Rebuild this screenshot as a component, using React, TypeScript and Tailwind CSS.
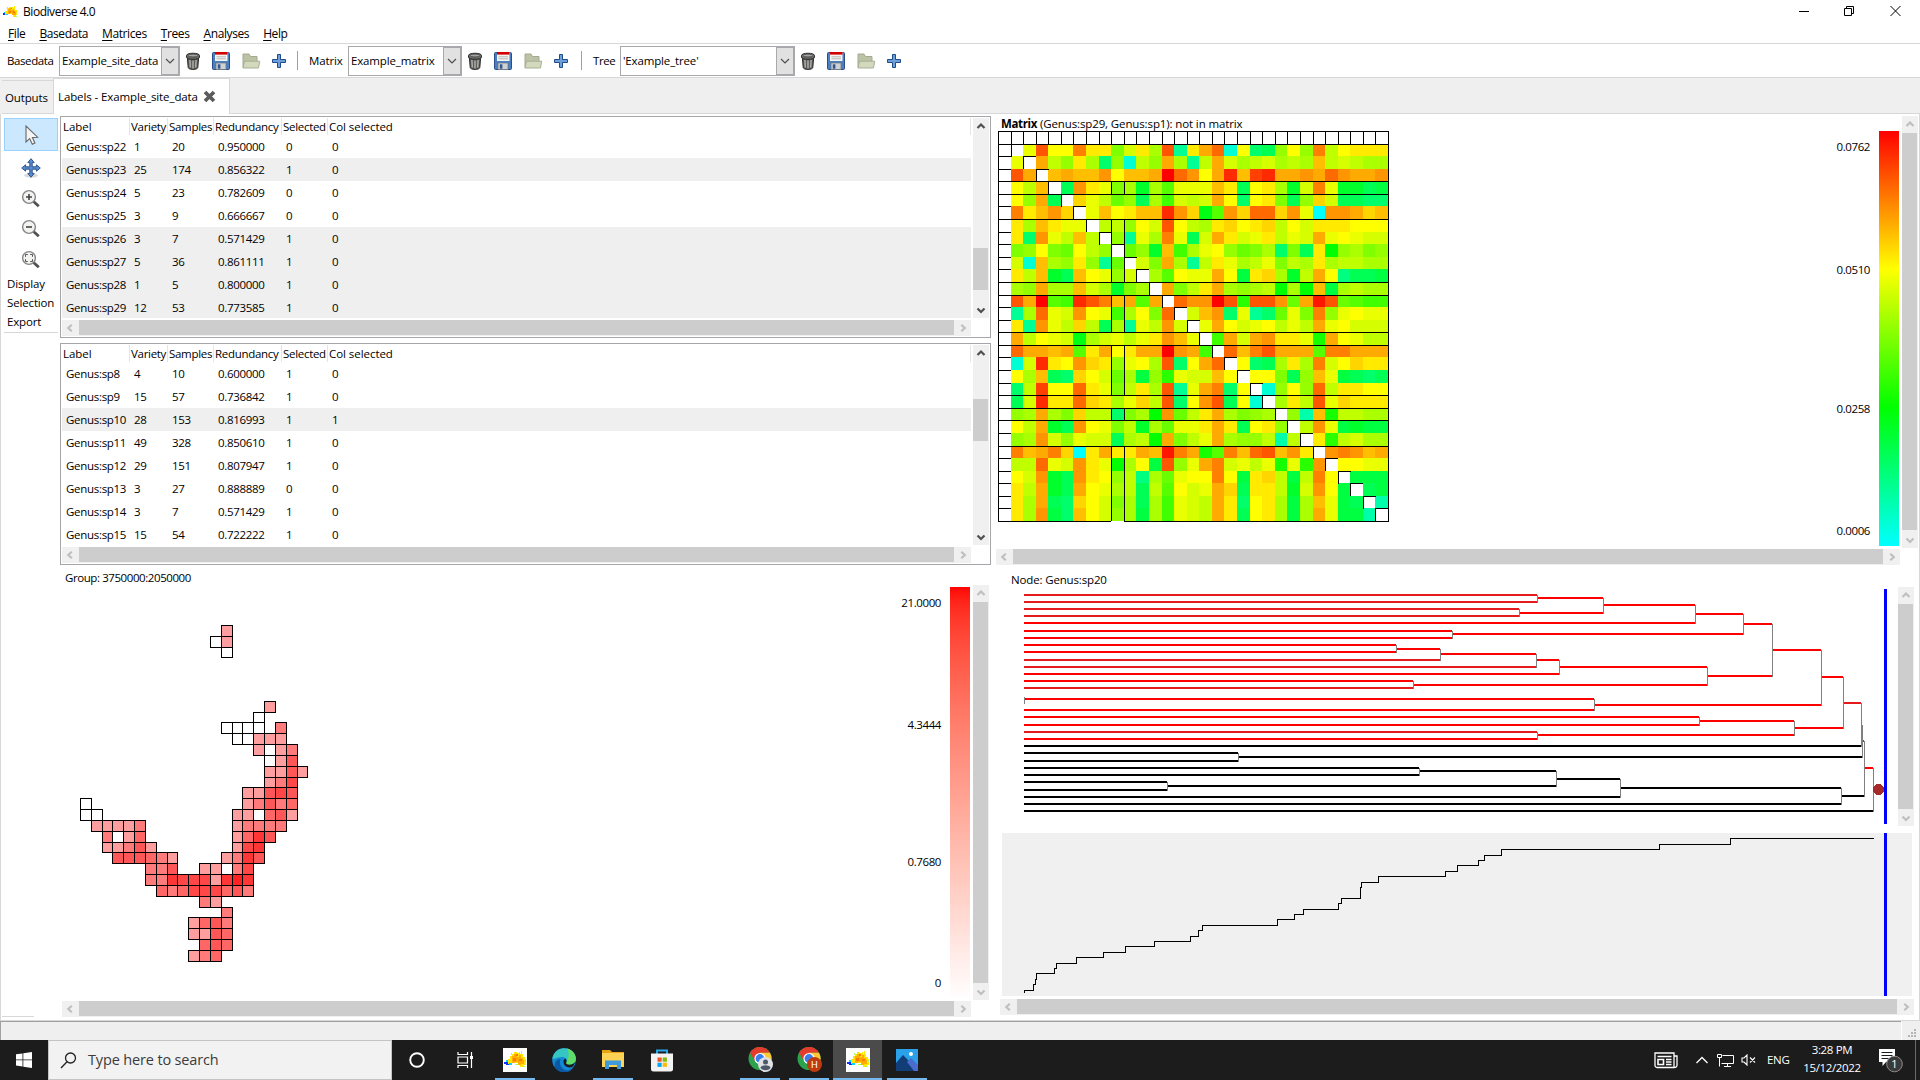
import React from "react";

type Kids = { children?: React.ReactNode };

/* ---------- small icons ---------- */

const Australia = ({ size, plain }: { size: number; plain?: boolean }) => (
  <svg width={size} height={size} viewBox="0 0 24 24" shapeRendering="crispEdges">
    {!plain && <rect width="24" height="24" fill="#fff" />}
    <path d="M3 12h2v-1h2V8h2V6h2V4h3v1h2V4h1v2h1V3h1v3h1v3h2v2h1v6h-2v2h-4v-2h-2v-2H9v1H6v1H3z" fill="#ffe600" />
    <path d="M9 8h2V6h3v3h2V7h2v3h2v2h1v4h-3v1h-3v-3h-3v1H9z" fill="#ffab00" />
    <path d="M10 10h3v3h-3zM16 11h3v2h-3zM13 6h2v2h-2z" fill="#ff7a00" />
    <path d="M3 12h2v2H3zM6 15h3v2H6z" fill="#00d8ff" />
    <path d="M1 14h4v2H1zM3 16h3v1H3z" fill="#1030ff" />
    <path d="M20 18h2v1h-2zM12 16h3v1h-3zM22 12h1v2h-1zM8 5h1v2H8z" fill="#9dff5a" />
  </svg>
);

const Trash = () => (
  <svg width="16" height="18" viewBox="0 0 16 18">
    <path d="M2.300 5h11.400l-.9 10.500c-.2 1.200-2 1.900-4.800 1.900s-4.600-.7-4.800-1.900z" fill="#5d5d5b" stroke="#2c2c2c" />
    <path d="M4.900 8l.4 7.500M8 8.500V16.500M11.100 8l-.4 7.500" stroke="#b9b9b5" strokeWidth="1.300" />
    <path d="M1.500 3.500c0-3 13-3 13 0v1.600c0 2.900-13 2.900-13 0z" fill="#6e6e6b" stroke="#2c2c2c" />
    <ellipse cx="8" cy="3.500" rx="5.200" ry="1.500" fill="#a5a5a2" stroke="#3a3a3a" strokeWidth=".8" />
  </svg>
);

const Floppy = () => (
  <svg width="20" height="20" viewBox="0 0 20 20">
    <rect x="1.500" y="1.500" width="17" height="17" rx="1" fill="#4a7fc1" stroke="#2a4f86" />
    <rect x="4" y="1" width="12.500" height="9" fill="#f4f4f2" />
    <rect x="4" y="1" width="12.500" height="2.600" fill="#d40000" />
    <path d="M5.500 5.800h9.500M5.500 7.800h9.500" stroke="#b8b8b8" />
    <rect x="5" y="12" width="10" height="6.500" fill="#cfd2d2" stroke="#6e7478" strokeWidth=".7" />
    <rect x="6.800" y="13.300" width="2.600" height="4.400" fill="#31568f" />
  </svg>
);

const Folder = () => (
  <svg width="20" height="18" viewBox="0 0 20 18">
    <path d="M2 15.500V2h6l1.500 2.500H16V15.500z" fill="#bcc3a4" stroke="#a4a993" />
    <path d="M3.500 9.200h15.200L17.500 16H2z" fill="#d3d9bd" stroke="#a9af97" />
  </svg>
);

const Plus = () => (
  <svg width="16" height="16" viewBox="0 0 16 16">
    <path d="M6.500 1.500h3v5h5v3h-5v5h-3v-5h-5v-3h5z" fill="#6f9fd8" stroke="#1f4b8a" />
  </svg>
);

const CloseX = () => (
  <svg width="13" height="13" viewBox="0 0 13 13">
    <path d="M2 2l9 9M11 2l-9 9" stroke="#5b5b59" strokeWidth="3.700" />
  </svg>
);

const Pointer = () => (
  <svg width="14" height="21" viewBox="0 0 14 21">
    <path d="M1 1v16l3.700-3.400 2.600 5.700 2.600-1.200-2.500-5.600 5.200-.3z" fill="#f5f5f5" stroke="#666" strokeWidth="1.100" />
  </svg>
);

const Move = () => (
  <svg width="20" height="20" viewBox="0 0 20 20">
    <ellipse cx="10" cy="17.500" rx="7" ry="2" fill="#d9d9d9" />
    <path
      d="M10 .7l3.200 3.900h-2v4.200h4.200v-2L19.300 10l-3.900 3.200v-2h-4.200v4.200h2L10 19.300l-3.200-3.900h2v-4.200H4.600v2L.7 10l3.900-3.200v2h4.200V4.600h-2z"
      fill="#5a8ccb"
      stroke="#204a87"
      strokeWidth=".9"
    />
  </svg>
);

const Zoom = ({ kind }: { kind: "in" | "out" | "fit" }) => (
  <svg width="20" height="20" viewBox="0 0 20 20">
    <path d="M12.500 12.500l5.300 4.800" stroke="#50504e" strokeWidth="2.800" />
    <circle cx="8" cy="8" r="6.400" fill="#f3f3f1" stroke="#858583" strokeWidth="1.400" />
    {kind === "in" && <path d="M5 8h6M8 5v6" stroke="#444" strokeWidth="1.600" />}
    {kind === "out" && <path d="M5 8h6" stroke="#444" strokeWidth="1.600" />}
    {kind === "fit" && <path d="M4.500 6.800V4.500h2.300M9.200 4.500h2.300v2.300M11.500 9.200v2.300H9.200M6.800 11.500H4.500V9.200" stroke="#555" fill="none" />}
  </svg>
);

const chevrons = {
  up: "M4.500 10L8 6.500l3.500 3.500",
  down: "M4.500 6.500L8 10l3.500-3.500",
  left: "M9.800 4.800L6.300 8l3.500 3.200",
  right: "M6.300 4.800L9.800 8l-3.500 3.200",
};

const Chevron = ({ dir, dark }: { dir: keyof typeof chevrons; dark?: boolean }) => (
  <svg width="16" height="16" viewBox="0 0 16 16" className="shrink-0">
    <path d={chevrons[dir]} fill="none" stroke={dark ? "#505050" : "#bfbfbf"} strokeWidth="2.200" />
  </svg>
);

const HScroll = ({ className = "" }: { className?: string }) => (
  <div className={`flex h-4 shrink-0 bg-[#f0f0f0] ${className}`}>
    <Chevron dir="left" />
    <div className="mr-px ml-px h-[15px] flex-1 bg-[#cdcdcd]" />
    <Chevron dir="right" />
  </div>
);

const VScroll = ({ className = "", dark, top, thumb }: { className?: string; dark?: boolean; top: number; thumb: number }) => (
  <div className={`flex w-4 shrink-0 flex-col justify-between bg-[#f0f0f0] ${className}`}>
    <Chevron dir="up" dark={dark} />
    <div className="flex-1">
      <div className="w-[15px] bg-[#cdcdcd]" style={{ marginTop: top, height: thumb }} />
    </div>
    <Chevron dir="down" dark={dark} />
  </div>
);

/* ---------- toolbar ---------- */

const Combo = ({ children, className }: Kids & { className: string }) => (
  <div className={`flex h-[30px] border border-[#a9a9ad] ${className}`}>
    <span className="flex-1 pl-[2px] leading-[28px]">{children}</span>
    <span className="flex w-[18px] items-center justify-center border border-[#a9a9ad] bg-[#e1e1e1]">
      <svg width="10" height="6" viewBox="0 0 10 6">
        <path d="M1 1l4 4 4-4" fill="none" stroke="#505050" strokeWidth="1.200" />
      </svg>
    </span>
  </div>
);

const Tools = () => (
  <div className="flex items-center">
    <span className="ml-[5px] flex w-[16px]"><Trash /></span>
    <span className="ml-[10px] flex"><Floppy /></span>
    <span className="ml-[10px] flex"><Folder /></span>
    <span className="ml-[10px] flex"><Plus /></span>
  </div>
);

/* ---------- label tables ---------- */

type Row = [string, string, string, string, string, string, boolean];

const upper: Row[] = [
  ["Genus:sp22", "1", "20", "0.950000", "0", "0", false],
  ["Genus:sp23", "25", "174", "0.856322", "1", "0", true],
  ["Genus:sp24", "5", "23", "0.782609", "0", "0", false],
  ["Genus:sp25", "3", "9", "0.666667", "0", "0", false],
  ["Genus:sp26", "3", "7", "0.571429", "1", "0", true],
  ["Genus:sp27", "5", "36", "0.861111", "1", "0", true],
  ["Genus:sp28", "1", "5", "0.800000", "1", "0", true],
  ["Genus:sp29", "12", "53", "0.773585", "1", "0", true],
];

const lower: Row[] = [
  ["Genus:sp8", "4", "10", "0.600000", "1", "0", false],
  ["Genus:sp9", "15", "57", "0.736842", "1", "0", false],
  ["Genus:sp10", "28", "153", "0.816993", "1", "1", true],
  ["Genus:sp11", "49", "328", "0.850610", "1", "0", false],
  ["Genus:sp12", "29", "151", "0.807947", "1", "0", false],
  ["Genus:sp13", "3", "27", "0.888889", "0", "0", false],
  ["Genus:sp14", "3", "7", "0.571429", "1", "0", false],
  ["Genus:sp15", "15", "54", "0.722222", "1", "0", false],
];

const cols = "grid grid-cols-[68px_38px_46px_68px_46px_1fr]";

const Table = ({ rows, top, thumb }: { rows: Row[]; top: number; thumb: number }) => (
  <div className="flex h-[222px] w-[931px] flex-col border border-[#a5a5aa] p-px">
    <div className="flex h-[200px]">
      <div className="flex h-[200px] w-[909px] flex-col overflow-hidden">
        <div className={`${cols} h-[17px] shrink-0 leading-[17px]`}>
          {["Label", "Variety", "Samples", "Redundancy", "Selected", "Col selected"].map((h) => (
            <span
              key={h}
              className={`border-r border-[#e5e5e5] pl-[1px] whitespace-nowrap ${h === "Col selected" || h === "Label" ? "tracking-[-0.050px]" : "tracking-[-0.300px]"}`}
            >
              {h}
            </span>
          ))}
        </div>
        <div className="flex flex-col tracking-[-0.300px]">
          {rows.map((r) => (
            <div key={r[0]} className={`${cols} h-[23px] leading-[23px] ${r[6] ? "bg-[#efefef]" : "bg-white"}`}>
              {r.slice(0, 6).map((c, i) => (
                <span key={i} className="pl-[4px]">{c}</span>
              ))}
            </div>
          ))}
        </div>
      </div>
      <VScroll className="ml-[2px]" dark top={top} thumb={thumb} />
    </div>
    <HScroll className="mt-[2px] w-[909px]" />
  </div>
);

/* ---------- matrix heat map ---------- */

// Upper triangle, one character per cell; each step is five degrees of hue.
const triangle = [
  "d4cc6bbiebg4vb85yctshch6fcbbb",
  "8fhbgthyfh8gvf8egfegfg9fefgg",
  "98997c998057c82932887857887",
  "s7bdigqgkddd9bscbgqe6dqqsr",
  "adfjhsglefe8ctcbishaesstt",
  "d9cb9927apk7a55a7dA778a9",
  "ffhce4cfgbacbafcebbbccc",
  "hvdg6dse8bedbfde8dcdee",
  "jhq9lgdchjigtisbohgih",
  "ei8gvfbdgfdifgbgffgg",
  "gkcdd8crbagqf8cussr",
  "8ifb8ghgfogo9rgfgg",
  "57704m447j814jkll",
  "e97tdvtjdi6hdcdd",
  "d8cedcfdf8dceee",
  "l8e87bbdn8cdff",
  "5964888k66888",
  "ctsgbg6ecabb",
  "ccish9drsts",
  "yhch5fbbcc",
  "gbf4dabbb",
  "hw9nffgg",
  "f7drqrr",
  "bmfegg",
  "76798",
  "ccdd",
  "rrr",
  "sr",
  "w",
];
const scale = "0123456789abcdefghijklmnopqrstuvwxyzA";
const S = 390 / 31;
const at = (i: number) => Math.round(i * S);
const ruled = [1, 4, 5, 7, 12, 13, 16, 17, 21, 22, 23, 25];
const columnRuns = [[4, 5], [7, 12], [13, 16], [17, 21], [22, 23], [25, 31]];
const idx = Array.from({ length: 31 }, (_, i) => i);

const Matrix = () => (
  <svg width="392" height="392" viewBox="0 0 392 392" shapeRendering="crispEdges" className="block">
    {idx.slice(1).map((r) =>
      idx.slice(1).map((c) => {
        if (r === c) return null;
        const a = Math.min(r, c);
        const b = Math.max(r, c);
        const hue = scale.indexOf(triangle[a - 1][b - a - 1]) * 5;
        return (
          <rect key={`${r}-${c}`} x={at(c)} y={at(r)} width={at(c + 1) - at(c)} height={at(r + 1) - at(r)} fill={`hsl(${hue} 100% 50%)`} />
        );
      }),
    )}
    <g fill="#000">
      {idx.slice(1).map((i) => (
        <g key={i}>
          <rect x={at(i)} y={at(i)} width={at(i + 1) - at(i)} height={at(i + 1) - at(i)} fill="#fff" />
          <rect x={at(i)} y={at(i)} width={S} height="1" />
          <rect x={at(i)} y={at(i)} width="1" height={S} />
          <rect x="0" y={at(i)} width={S} height="1" />
          <rect x={at(i)} y="0" width="1" height={S} />
        </g>
      ))}
      {ruled.map((i) => (
        <rect key={i} x="0" y={at(i)} width="390" height="1" />
      ))}
      {columnRuns.map(([a, b]) =>
        [9, 10].map((c) => <rect key={`${a}${c}`} x={at(c)} y={at(a)} width="1" height={at(b) - at(a)} />),
      )}
      <rect x="0" y="0" width="391" height="1" />
      <rect x="0" y="0" width="1" height="391" />
      <rect x="390" y="0" width="1" height="391" />
      <rect x="0" y="390" width={at(9)} height="1" />
      <rect x={at(10)} y="390" width={390 - at(10)} height="1" />
    </g>
  </svg>
);

/* ---------- map ---------- */

const shades: Record<string, string> = {
  w: "#ffffff", "1": "#ff9e9e", "2": "#ff7b7b", "3": "#ff6666", "4": "#ff5757", "5": "#ff4747", "6": "#ff3636", "7": "#ff2222",
};
const mapRuns: [number, number, string][] = [
  [0, 13, "1"], [1, 12, "w1"], [2, 13, "w"], [7, 17, "1"], [8, 16, "w"], [9, 13, "wwww"], [9, 18, "2"],
  [10, 14, "ww111"], [11, 16, "1w12"], [12, 17, "w14"], [13, 17, "1141"], [14, 17, "125"], [15, 15, "11454"],
  [16, 0, "w"], [16, 15, "12423"], [17, 0, "ww"], [17, 14, "11w341"], [18, 1, "11112"], [18, 14, "12222"],
  [19, 2, "2w13"], [19, 14, "1364"], [20, 2, "11241"], [20, 14, "156"], [21, 3, "444321"], [21, 13, "1264"],
  [22, 6, "224"], [22, 11, "11w25"], [23, 6, "2265551676"], [24, 7, "323555342"], [25, 11, "21"], [26, 13, "2"],
  [27, 10, "1342"], [28, 10, "1143"], [29, 11, "343"], [30, 10, "123"],
];
const M = 10.83;

const SpeciesMap = () => (
  <svg width="240" height="350" viewBox="0 0 240 350" shapeRendering="crispEdges" className="block">
    {mapRuns.flatMap(([r, c0, s]) =>
      s.split("").map((k, i) => {
        const x = Math.round((c0 + i) * M);
        const y = Math.round(r * M);
        return (
          <rect
            key={`${r}-${c0 + i}`}
            x={x + 0.5}
            y={y + 0.5}
            width={Math.round((c0 + i + 1) * M) - x}
            height={Math.round((r + 1) * M) - y}
            fill={shades[k]}
            stroke="#000"
          />
        );
      }),
    )}
  </svg>
);

/* ---------- dendrogram ---------- */

const R = "#ff0000";
const C = "#e41a1c";
const K = "#000000";
const branches: [number, number, number, string][] = [
  [595, 1024, 1537, C], [602, 1024, 1537, C], [609, 1024, 1519, C], [616, 1024, 1519, C], [623, 1024, 1695, R],
  [631, 1024, 1452, R], [638, 1024, 1452, R], [645, 1024, 1396, R], [652, 1024, 1396, R], [660, 1024, 1440, C],
  [667, 1024, 1536, C], [674, 1024, 1559, R], [681, 1024, 1413, R], [688, 1024, 1413, C], [699, 1025, 1594, R],
  [710, 1024, 1594, R], [717, 1024, 1699, R], [725, 1024, 1699, R], [732, 1024, 1537, C], [739, 1024, 1537, R],
  [746, 1024, 1861, K], [753, 1024, 1238, K], [761, 1024, 1238, K], [768, 1024, 1419, K], [775, 1024, 1419, K],
  [782, 1024, 1167, K], [790, 1024, 1167, K], [797, 1024, 1620, K], [804, 1024, 1841, K], [811, 1024, 1873, K],
  [598, 1538, 1603, R], [613, 1520, 1603, R], [605, 1604, 1695, R], [614, 1696, 1743, R], [634, 1453, 1743, R],
  [624, 1744, 1772, R], [649, 1397, 1440, R], [654, 1441, 1536, R], [660, 1537, 1559, R], [667, 1560, 1707, R],
  [685, 1414, 1707, R], [676, 1708, 1772, R], [650, 1773, 1821, R], [705, 1595, 1821, R], [677, 1822, 1843, R],
  [721, 1700, 1794, R], [735, 1538, 1794, R], [728, 1795, 1843, R], [703, 1844, 1861, C], [741, 1863, 1864, C],
  [757, 1239, 1862, K], [771, 1420, 1556, K], [786, 1168, 1556, K], [779, 1557, 1620, K], [788, 1621, 1841, K],
  [796, 1842, 1864, K], [768, 1865, 1873, R],
];
const joins: [number, number, number][] = [
  [1537, 595, 602], [1519, 609, 616], [1603, 598, 613], [1695, 605, 623], [1743, 614, 634], [1452, 631, 638],
  [1396, 645, 652], [1440, 649, 660], [1536, 654, 667], [1559, 660, 674], [1413, 681, 688], [1707, 667, 685],
  [1772, 624, 676], [1024, 697, 703], [1594, 699, 710], [1821, 650, 705], [1699, 717, 725], [1537, 732, 739],
  [1794, 721, 735], [1843, 677, 728], [1861, 703, 746], [1862, 725, 757], [1238, 753, 761], [1419, 768, 775],
  [1167, 782, 790], [1556, 771, 786], [1620, 779, 797], [1841, 788, 804], [1864, 741, 796], [1873, 768, 811],
];

const Tree = () => (
  <svg width="896" height="245" viewBox="1002 585 896 245" shapeRendering="crispEdges" className="block">
    {branches.map(([y, a, b, f]) => (
      <rect key={`${y}-${a}`} x={a} y={y - 1} width={b - a} height="2" fill={f} />
    ))}
    {joins.map(([x, a, b]) => (
      <rect key={`${x}-${a}`} x={x} y={a} width="1" height={b - a + 1} fill="#808080" />
    ))}
    <circle cx="1878.500" cy="789.500" r="5.500" fill="#a52a2a" />
    <rect x="1884" y="589" width="3" height="235" fill="#0000ff" />
  </svg>
);

const steps: [number, number][] = [
  [1024, 990], [1033, 984], [1035, 979], [1036, 973], [1054, 968], [1056, 963], [1076, 957], [1103, 952], [1125, 946],
  [1154, 941], [1190, 936], [1198, 930], [1202, 925], [1277, 919], [1294, 914], [1303, 909], [1338, 903], [1341, 898],
  [1360, 887], [1361, 882], [1378, 876], [1445, 871], [1457, 865], [1478, 860], [1484, 855], [1501, 849], [1659, 844],
  [1730, 838],
];

const StepPlot = () => (
  <svg width="910" height="163" viewBox="1002 833 910 163" shapeRendering="crispEdges" className="block bg-[#f0f0f0]">
    <path d={`M1024.500 993${steps.map(([x, y]) => `H${x + 0.5}V${y + 0.5}`).join("")}H1874`} fill="none" stroke="#000" />
    <rect x="1884" y="833" width="3" height="163" fill="#0000ff" />
  </svg>
);

const Ticks = ({ items, className }: { items: [string, string][]; className: string }) => (
  <div className={`flex flex-col items-end tracking-[-0.400px] ${className}`}>
    {items.map(([t, h]) => (
      <span key={t} className={`leading-4 ${h}`}>{t}</span>
    ))}
  </div>
);

/* ---------- task bar ---------- */

const Chrome = ({ badge }: { badge: string }) => (
  <svg width="28" height="28" viewBox="0 0 28 28" className="ml-[2px]">
    <circle cx="13" cy="12.500" r="11.500" fill="#2ba24c" />
    <path d="M3.040 6.750A11.500 11.500 0 0 1 22.960 6.750H13L8 15z" fill="#e33b2e" />
    <path d="M22.960 6.750A11.500 11.500 0 0 1 13 24L18 13 13 6.750z" fill="#fcc934" />
    <circle cx="13" cy="12.500" r="5.600" fill="#fff" />
    <circle cx="13" cy="12.500" r="4.400" fill="#3b7ded" />
    <circle cx="18.500" cy="18.500" r="7.500" fill={badge === "H" ? "#c0390f" : "#dfe1e5"} />
    {badge === "H" ? (
      <text x="18.500" y="22" fontSize="9.500" textAnchor="middle" fill="#fff" fontFamily="Roboto, sans-serif">H</text>
    ) : (
      <g fill="#4d5868">
        <circle cx="18.500" cy="16" r="2.500" />
        <path d="M13.500 22c0-3.600 10-3.600 10 0-2.500 3-7.500 3-10 0z" />
      </g>
    )}
  </svg>
);

const Edge = () => (
  <svg width="24" height="24" viewBox="0 0 24 24">
    <circle cx="12" cy="12" r="11.800" fill="#1389d6" />
    <path d="M.4 10.500C1.500 4 6.500.2 12 .2c7 0 11.800 5 11.800 10.300 0 4-3 6.300-6.300 6.300-2.500 0-4-1-3.300-2.200 1.300-2.100.3-5.600-4-5.600-4.500 0-8 2.500-9.800 1.500z" fill="#35c6c3" />
    <path d="M15 .6c5.300 1.300 8.800 5.600 8.800 9.900 0 4-3 6.300-6.300 6.300-2.500 0-4-1-3.300-2.200C16.500 11 18 5 15 .6z" fill="#5fdc6a" />
    <path d="M8.500 11.500c-2 5 1.500 10.800 7.500 10.800 2 0 4-.8 5.500-2A11.800 11.800 0 0 1 3 19.700C1.500 14 5.500 10.500 8.500 11.500z" fill="#0c59a4" />
    <path d="M14.200 14.600c-.7 1.200.8 2.200 3.300 2.200 2.200 0 4.200-1 5.300-2.700-.3 2-.9 3.400-1.800 4.500-4 2-9 .5-9.500-4.600-.1-1.500.5-2.500 1.500-3.500 1.600.6 2 2.600 1.200 4.100z" fill="#1c1c1c" />
  </svg>
);

const Explorer = () => (
  <svg width="24" height="22" viewBox="0 0 24 22">
    <path d="M1 1h8l2 2h12v6H1z" fill="#e8a317" />
    <path d="M1 4h22v14H1z" fill="#fcd354" />
    <path d="M4 20v-8.500h16V20h-4v-4h-8v4z" fill="#3e9ad8" />
  </svg>
);

const Store = () => (
  <svg width="24" height="24" viewBox="0 0 24 24">
    <path d="M7 6V2.500h10V6" fill="none" stroke="#28a8ea" strokeWidth="2" />
    <path d="M1 5.500h22V21a2.500 2.500 0 0 1-2.500 2.500h-17A2.500 2.500 0 0 1 1 21z" fill="#f3f3f3" />
    <path d="M7.500 9.500h4.200v4.200H7.500z" fill="#f35325" />
    <path d="M12.700 9.500h4.200v4.200h-4.200z" fill="#81bc06" />
    <path d="M7.500 14.700h4.200v4.200H7.500z" fill="#05a6f0" />
    <path d="M12.700 14.700h4.200v4.200h-4.200z" fill="#ffba08" />
  </svg>
);

const Photos = () => (
  <svg width="22" height="22" viewBox="0 0 22 22">
    <rect width="22" height="22" fill="#2aa1e8" />
    <path d="M0 14L7 6l15 15v1H0z" fill="#123e78" />
    <path d="M11 13l4-4 7 7v6h-4z" fill="#4a6ccc" />
    <circle cx="15" cy="5" r="2" fill="#fff" />
  </svg>
);

const TaskItem = ({ children, open, active }: Kids & { open?: boolean; active?: boolean }) => (
  <div className={`flex h-10 w-[49px] flex-col items-center ${active ? "bg-[#4b4b4b]" : ""}`}>
    <div className="flex h-[38px] items-center justify-center pt-px">{children}</div>
    <div className={`h-[2px] ${active ? "w-full" : "w-10"} ${open || active ? "bg-[#76b9ed]" : ""}`} />
  </div>
);

export default function App() {
  return (
    <div className="flex h-[1080px] w-[1920px] flex-col overflow-hidden bg-white font-['Open_Sans','Noto_Sans',sans-serif] text-[11.5px] tracking-[-0.150px] text-black">
      {/* title bar */}
      <div className="flex h-6 shrink-0 items-center">
        <span className="ml-[2px] flex"><Australia size={16} plain /></span>
        <span className="ml-[5px] text-[12px] tracking-[-0.450px]">Biodiverse 4.0</span>
        <svg width="110" height="14" viewBox="0 0 110 14" className="mt-[-3px] mr-[12px] ml-auto" fill="none" stroke="#000">
          <path d="M1 7.500h10" />
          <path d="M46.500 4.500h7v7h-7zM48.500 4.500v-2h7v7h-2" />
          <path d="M92.500 2l10 10M102.500 2l-10 10" />
        </svg>
      </div>

      {/* menu */}
      <div className="flex h-5 shrink-0 items-center gap-[14px] border-b border-[#d7d7d7] pl-2 text-[12px] tracking-[-0.400px]">
        {["File", "Basedata", "Matrices", "Trees", "Analyses", "Help"].map((m) => (
          <span key={m}><u className="underline-offset-2">{m[0]}</u>{m.slice(1)}</span>
        ))}
      </div>

      {/* toolbar */}
      <div className="flex h-[34px] shrink-0 items-center border-b border-[#d7d7d7]">
        <span className="w-[52px] pl-[7px] tracking-[-0.400px]">Basedata</span>
        <Combo className="ml-[7px] w-[121px]">Example_site_data</Combo>
        <Tools />
        <span className="ml-[10px] h-[19px] w-px bg-[#a0a0a0]" />
        <span className="ml-[11px] w-[39px]">Matrix</span>
        <Combo className="w-[114px]">Example_matrix</Combo>
        <Tools />
        <span className="ml-[12px] h-[19px] w-px bg-[#a0a0a0]" />
        <span className="ml-[11px] w-[27px] tracking-[-0.400px]">Tree</span>
        <Combo className="w-[175px]">'Example_tree'</Combo>
        <Tools />
      </div>

      {/* notebook tabs */}
      <div className="flex h-9 shrink-0 bg-[#efefef]">
        <div className="mt-[2px] ml-[2px] w-[51px] border-t border-b border-[#d7d7d7] pl-[3px] leading-[33px]">Outputs</div>
        <div className="flex w-[177px] items-center border-x border-t border-[#d7d7d7] bg-white pl-[4px]">
          <span className="w-[140px] tracking-[-0.110px] whitespace-nowrap">Labels - Example_site_data</span>
          <span className="ml-[5px] flex"><CloseX /></span>
        </div>
        <div className="flex-1 border-b border-[#d7d7d7]" />
      </div>

      {/* page */}
      <div className="flex h-[907px] shrink-0 border-x border-b border-[#d7d7d7]">
        <div className="flex w-[59px] flex-col pt-[4px]">
          <div className="ml-[3px] flex h-[33px] w-[54px] items-center justify-center border border-[#99d1ff] bg-[#cce8ff] pt-[2px] pl-[2px]"><Pointer /></div>
          <div className="flex flex-col gap-[10.500px] pt-[7px] pl-[20px]">
            <Move /><Zoom kind="in" /><Zoom kind="out" /><Zoom kind="fit" />
          </div>
          <div className="mt-[4px] ml-[3px] flex h-[59px] w-[54px] flex-col border-b border-[#d7d7d7] pl-[3px] leading-[19px]">
            <span>Display</span><span>Selection</span><span>Export</span>
          </div>
          <div className="mt-auto ml-px mb-[3px] w-8 border-b border-[#d7d7d7]" />
        </div>

        <div className="flex w-[933px] flex-col pt-[2px]">
          <Table rows={upper} top={114} thumb={42} />
          <div className="h-[5px] shrink-0" />
          <Table rows={lower} top={38} thumb={42} />
          <div className="h-[20px] shrink-0 pt-[3px] pl-[5px] leading-[20px] tracking-[-0.420px]">Group: 3750000:2050000</div>
          <div className="flex h-[416px] items-start">
            <div className="flex flex-1 pt-[40px] pl-[20px]"><SpeciesMap /></div>
            <Ticks
              className="mr-[9px]"
              items={[["21.0000", "mt-[10px]"], ["4.3444", "mt-[106px]"], ["0.7680", "mt-[121px]"], ["0", "mt-[105px]"]]}
            />
            <div className="mt-[2px] h-[413px] w-5 bg-linear-to-b from-[#ff0000] to-white" />
            <VScroll className="mr-[4px] ml-[3px] h-[415px]" top={1} thumb={381} />
          </div>
          <HScroll className="ml-[2px] w-[909px]" />
        </div>

        <div className="flex w-[926px] flex-col">
          <div className="flex h-[434px] pl-[5px]">
            <div className="flex flex-1 flex-col">
              <span className="h-[17px] pl-[3px] leading-[20px] tracking-[-0.120px]"><b className="tracking-[-0.350px]">Matrix</b> (Genus:sp29, Genus:sp1): not in matrix</span>
              <Matrix />
            </div>
            <Ticks
              className="mr-[9px]"
              items={[["0.0762", "mt-[25px]"], ["0.0510", "mt-[107px]"], ["0.0258", "mt-[123px]"], ["0.0006", "mt-[106px]"]]}
            />
            <div className="mt-[17px] mb-[2px] w-5 bg-[linear-gradient(to_bottom,#ff0000,#ffff00_33.300%,#00ff00_66.600%,#00ffff)]" />
            <VScroll className="mt-[2px] mr-px ml-[3px]" top={1} thumb={397} />
          </div>
          <HScroll className="mt-[1px] ml-[3px] w-[904px]" />
          <div className="h-[20px] shrink-0 pt-[5px] pl-[18px] leading-[20px]">Node: Genus:sp20</div>
          <div className="flex h-[248px] pl-[9px]">
            <Tree />
            <VScroll className="mt-[2px] mb-[7px]" top={1} thumb={205} />
          </div>
          <div className="pl-[9px]"><StepPlot /></div>
          <HScroll className="mt-[3px] ml-[7px] w-[914px]" />
        </div>
      </div>

      {/* status bar */}
      <div className="flex h-[19px] shrink-0 bg-[#efefef]">
        <div className="flex-1 border-t border-l border-t-[#a0a0a0] border-l-[#a0a0a0]" />
        <div className="flex w-[19px] items-end justify-end border-l border-white pr-[4px] pb-[3px]">
          <svg width="8" height="8" viewBox="0 0 8 8" fill="#b5b5b5">
            <path d="M0 6h2v2H0zM3 6h2v2H3zM6 6h2v2H6zM3 3h2v2H3zM6 3h2v2H6zM6 0h2v2H6z" />
          </svg>
        </div>
      </div>

      {/* task bar */}
      <div className="flex h-10 shrink-0 bg-[#1c1c1c] tracking-normal text-white">
        <div className="flex w-12 items-center justify-center">
          <svg width="16" height="16" viewBox="0 0 16 16" fill="#fff">
            <path d="M0 2.300l6.500-.9v6.100H0zM7.300 1.300L16 0v7.500H7.300zM0 8.300h6.500v6.200L0 13.600zM7.300 8.300H16V16l-8.700-1.200z" />
          </svg>
        </div>
        <div className="flex w-[344px] items-center border border-[#c5c5c5] bg-[#f2f2f2] pl-[11px] text-[#3b3b3b]">
          <svg width="17" height="17" viewBox="0 0 17 17" fill="none" stroke="#222" strokeWidth="1.300">
            <circle cx="10.500" cy="6" r="5" />
            <path d="M7 9.700L1 16" />
          </svg>
          <span className="ml-[11px] text-[14.500px] tracking-[-0.150px]">Type here to search</span>
        </div>
        <TaskItem>
          <svg width="16" height="16" viewBox="0 0 16 16"><circle cx="8" cy="8" r="6.800" fill="none" stroke="#fff" strokeWidth="1.900" /></svg>
        </TaskItem>
        <TaskItem>
          <svg width="17" height="16" viewBox="0 0 17 16" fill="none" stroke="#fff" strokeWidth="1.200">
            <path d="M1 0v2.500h9.500V0M1 16v-2.500h9.500V16M1 5h9.500v6H1zM14.500 0v16" />
            <path d="M13 4h3v3h-3z" fill="#fff" stroke="none" />
          </svg>
        </TaskItem>
        <TaskItem open><Australia size={24} /></TaskItem>
        <TaskItem><Edge /></TaskItem>
        <TaskItem open><Explorer /></TaskItem>
        <TaskItem><Store /></TaskItem>
        <TaskItem />
        <TaskItem open><Chrome badge="user" /></TaskItem>
        <TaskItem open><Chrome badge="H" /></TaskItem>
        <TaskItem active><Australia size={24} /></TaskItem>
        <TaskItem open><Photos /></TaskItem>
        <div className="ml-auto flex items-center">
          <svg width="24" height="17" viewBox="0 0 24 17" fill="none" stroke="#fff" strokeWidth="1.300">
            <path d="M1 1h19v14.500H3A2 2 0 0 1 1 13.500zM20 4h3v9.500a2 2 0 0 1-3 1.500M3.500 4.500h14M12 7.500h5.500M12 10h5.500M12 12.500h5.500" />
            <path d="M4 7.500h5.500v5H4z" strokeWidth="1.600" />
          </svg>
          <svg width="14" height="8" viewBox="0 0 14 8" className="ml-[17px]" fill="none" stroke="#fff" strokeWidth="1.300"><path d="M1.500 7L7 1.500 12.500 7" /></svg>
          <svg width="17" height="15" viewBox="0 0 17 15" className="ml-[8px]" fill="none" stroke="#fff"><path d="M5.500 2.500h11v8h-12M.5 1.500h4v3h-4zM2.500 4.500v9M10.500 10.500v3M7 13.500h7" /></svg>
          <svg width="15" height="12" viewBox="0 0 15 12" className="ml-[7px]" fill="none" stroke="#fff" strokeWidth="1.100"><path d="M1 4h2l3-3v10L3 8H1zM9 3.500l5 5M14 3.500l-5 5" /></svg>
          <span className="ml-[11px] w-[24px] text-[11.500px] tracking-[-0.300px]">ENG</span>
          <div className="mt-[-2px] ml-[11px] flex w-[60px] flex-col items-center text-[11.500px] leading-[18px] tracking-[-0.350px] whitespace-nowrap"><span>3:28 PM</span><span>15/12/2022</span></div>
          <svg width="26" height="26" viewBox="0 0 26 26" className="ml-[16px]">
            <path d="M1 2h16v13H8l-3.500 4V15H1z" fill="#fff" />
            <path d="M3.500 5.500h11M3.500 8.500h11M3.500 11.500h7" stroke="#1c1c1c" />
            <circle cx="16.500" cy="17" r="7.800" fill="#3a3a3a" stroke="#8a8a8a" />
            <text x="16.500" y="21" fontSize="11" textAnchor="middle" fill="#fff">1</text>
          </svg>
          <span className="ml-[11px] h-10 w-px bg-[#6a6a6a]" />
          <span className="w-[4px]" />
        </div>
      </div>
    </div>
  );
}
